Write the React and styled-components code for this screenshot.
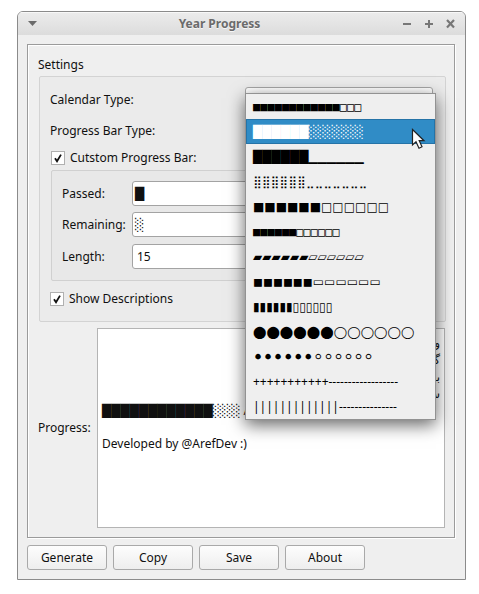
import React from "react";
import styled, { createGlobalStyle } from "styled-components";

const Global = createGlobalStyle`
  * { box-sizing: border-box; }
  html, body { margin: 0; background: #fff; }
  body { font: 12px/16px "Noto Sans", "DejaVu Sans", sans-serif; color: #101010; width: 479px; height: 594px; overflow: hidden; }
`;

const Desktop = styled.main`
  position: relative;
  width: 479px;
  height: 594px;
  padding: 11px 13px 14px 17px;
`;

const Window = styled.section`
  width: 449px;
  height: 569px;
  border: 1px solid #8b8b8b;
  border-radius: 6px 6px 0 0;
  background: #efefef;
  overflow: hidden;
`;

const TitleBar = styled.header`
  height: 23px;
  display: grid;
  grid-template-columns: 20px 1fr 64px;
  align-items: center;
  background: linear-gradient(#ececec, #dcdcdc);
  box-shadow: inset 0 1px 0 #f8f8f8;
`;

const Title = styled.h1`
  margin: 0;
  text-align: center;
  font-size: 12px;
  line-height: 22px;
  font-weight: 700;
  color: #6b6b6b;
  text-shadow: 0 1px 0 #f6f6f6;
`;

const MenuMark = styled.svg`
  display: block;
  margin-left: 10px;
`;

const Controls = styled.svg`
  display: block;
`;

const Content = styled.div`
  padding: 9px 10px 9px 9px;
`;

const Frame = styled.div`
  width: 428px;
  height: 494px;
  padding: 11px 9px 9px 10px;
  border: 1px solid #9b9b9b;
  box-shadow: inset 1px 1px 0 #fff, 1px 1px 0 #fff;
`;

const GroupTitle = styled.div`
  height: 20px;
  line-height: 18px;
`;

const Group = styled.div`
  width: 407px;
  height: 246px;
  margin-left: 1px;
  padding: 10px 11px 0 10px;
  background: #ebebeb;
  border: 1px solid #d3d3d3;
  border-radius: 2px;
`;

const Field = styled.div`
  display: grid;
  grid-template-columns: ${(p) => p.$label}px 1fr;
  align-items: center;
  height: 25px;
  margin-bottom: ${(p) => p.$gap || 0}px;
`;

const Combo = styled.div`
  height: 25px;
  width: 188px;
  border: 1px solid #a6a6a6;
  border-radius: 3px;
  background: linear-gradient(#fff, #ededed);
`;

const CheckRow = styled.label`
  display: flex;
  align-items: center;
  gap: 5px;
  height: 16px;
  margin-left: ${(p) => p.$inset}px;
`;

const CheckBox = styled.span`
  width: 14px;
  height: 14px;
  border: 1px solid #b0b0b0;
  background: #fff;
  svg { display: block; }
`;

const InnerGroup = styled.div`
  width: 382px;
  height: 111px;
  margin: 4px 0 10px 1px;
  padding: 10px 10px 0;
  background: #e8e8e8;
  border: 1px solid #d0d0d0;
  border-radius: 2px;
`;

const Input = styled.div`
  height: 25px;
  border: 1px solid #a3a3a3;
  border-radius: 3px;
  background: #fff;
  padding-left: ${(p) => p.$pad}px;
  line-height: 23px;
  white-space: pre;
`;

const ProgressRow = styled.div`
  display: grid;
  grid-template-columns: 59px 348px;
  align-items: center;
  height: 200px;
  margin-top: 6px;
`;

const TextArea = styled.div`
  height: 200px;
  border: 1px solid #b4b4b4;
  background: #fff;
  padding: 5px 4px;
  white-space: pre;
`;

const RtlLine = styled.div`
  direction: rtl;
  height: 17px;
  line-height: 17px;
`;

const Line = styled.div`
  height: ${(p) => p.$h}px;
  line-height: 17px;
`;

const Blocks = styled.span`
  font-family: ${(p) => (p.$face ? `"${p.$face}", ` : "")}"DejaVu Sans", sans-serif;
  font-variant-emoji: text;
`;

const Buttons = styled.footer`
  display: flex;
  gap: 6px;
  margin-top: 7px;
`;

const Button = styled.button`
  width: 80px;
  height: 25px;
  padding: 0;
  border: 1px solid #a9a9a9;
  border-radius: 3px;
  background: linear-gradient(#fdfdfd, #eeeeee);
  font: inherit;
  color: inherit;
`;

const Popup = styled.ul`
  position: absolute;
  left: 245px;
  top: 93px;
  width: 191px;
  height: 327px;
  margin: 0;
  padding: 0;
  list-style: none;
  background: #efefef;
  border: 1px solid #929292;
  box-shadow: 0 5px 16px rgba(0, 0, 0, 0.6);
`;

const Option = styled.li`
  height: 25px;
  line-height: 23px;
  padding-left: 6px;
  border: 1px solid ${(p) => (p.$active ? "#2573a7" : "transparent")};
  background: ${(p) => (p.$active ? "#308cc6" : "none")};
  color: ${(p) => (p.$active ? "#fff" : "#000")};
  white-space: pre;
  overflow: hidden;
`;

const Cursor = styled.svg`
  position: absolute;
  left: 411px;
  top: 128px;
`;

const options = [
  ["■", 12, "□", 3, "DejaVu Sans Mono"],
  ["█", 6, "░", 6, "DejaVu Sans"],
  ["█", 6, "▁", 6, "DejaVu Sans"],
  ["⣿", 6, "⣀", 7, "DejaVu Sans"],
  ["■", 6, "□", 6, "DejaVu Sans"],
  ["■", 6, "□", 6, "DejaVu Sans Mono"],
  ["▰", 6, "▱", 6, "DejaVu Sans"],
  ["◼", 6, "▭", 6, "DejaVu Sans"],
  ["▮", 6, "▯", 6, "DejaVu Sans"],
  ["⬤", 6, "◯", 6, "DejaVu Sans"],
  ["⚫", 6, "⚪", 6, "DejaVu Sans"],
  ["+", 11, "-", 18, "Noto Sans"],
  ["|", 13, "-", 15, "Noto Sans"],
];

const Tick = () => (
  <CheckBox>
    <svg width="12" height="12" viewBox="0 0 12 12">
      <path d="M3 6.2 L5 9.2 L9 2.6" fill="none" stroke="#111" strokeWidth="1.8" />
    </svg>
  </CheckBox>
);

export default function App() {
  return (
    <Desktop>
      <Global />
      <Window>
        <TitleBar>
          <MenuMark width="9" height="5" viewBox="0 0 9 5">
            <path d="M0 0H9L4.5 5Z" fill="#6b6b6b" />
          </MenuMark>
          <Title>Year Progress</Title>
          <Controls width="64" height="12" viewBox="0 0 64 12" fill="none" stroke="#777" strokeWidth="2">
            <path d="M1 6H9M23 6H31M27 2V10" transform="translate(1 0)" />
            <path d="M46 2L53 9.5M53 2L46 9.5" strokeWidth="2.2" />
          </Controls>
        </TitleBar>
        <Content>
          <Frame>
            <GroupTitle>Settings</GroupTitle>
            <Group>
              <Field $label={195} $gap={6}>
                <span>Calendar Type:</span>
                <Combo />
              </Field>
              <Field $label={195} $gap={7}>
                <span>Progress Bar Type:</span>
                <Combo />
              </Field>
              <CheckRow $inset={1}>
                <Tick />
                Cutstom Progress Bar:
              </CheckRow>
              <InnerGroup>
                <Field $label={70} $gap={6}>
                  <span>Passed:</span>
                  <Input $pad={2}><Blocks>█</Blocks></Input>
                </Field>
                <Field $label={70} $gap={7}>
                  <span>Remaining:</span>
                  <Input $pad={2}><Blocks>░</Blocks></Input>
                </Field>
                <Field $label={70}>
                  <span>Length:</span>
                  <Input $pad={4}>15</Input>
                </Field>
              </InnerGroup>
              <CheckRow $inset={0}>
                <Tick />
                Show Descriptions
              </CheckRow>
            </Group>
            <ProgressRow>
              <span>Progress:</span>
              <TextArea>
                <RtlLine>وقت</RtlLine>
                <RtlLine>گذشته</RtlLine>
                <RtlLine>باقی</RtlLine>
                <RtlLine>سال</RtlLine>
                <Line $h={33}><Blocks>{"█".repeat(12) + "░".repeat(3)}</Blocks> /</Line>
                <Line $h={17}>Developed by @ArefDev :)</Line>
              </TextArea>
            </ProgressRow>
          </Frame>
          <Buttons>
            {["Generate", "Copy", "Save", "About"].map((name) => (
              <Button key={name}>{name}</Button>
            ))}
          </Buttons>
        </Content>
      </Window>
      <Popup>
        {options.map(([full, n, empty, m, face], i) => (
          <Option key={i} $active={i === 1}>
            <Blocks $face={face}>{full.repeat(n) + empty.repeat(m)}</Blocks>
          </Option>
        ))}
      </Popup>
      <Cursor width="15" height="22" viewBox="0 0 15 22">
        <path d="M1.5 1.5V17L5 13.8L8 20.2L11 18.8L8.2 12.7H13Z" fill="#fff" stroke="#222" strokeWidth="1.2" />
      </Cursor>
    </Desktop>
  );
}
